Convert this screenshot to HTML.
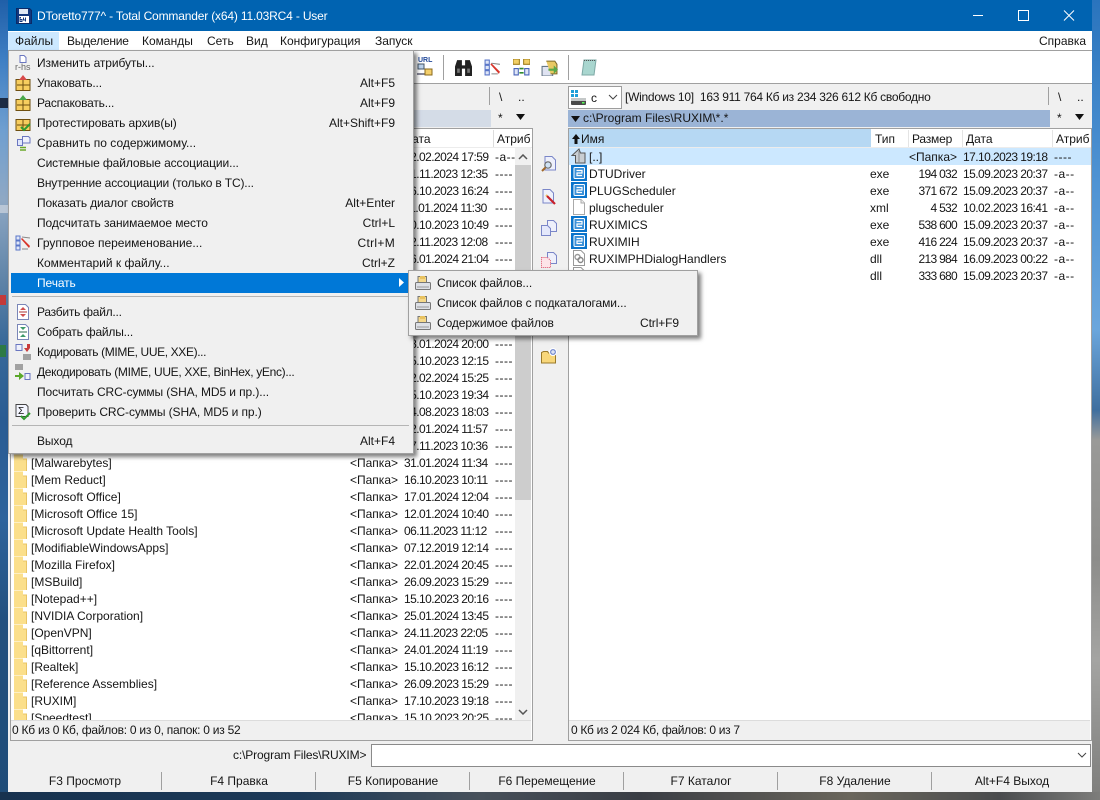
<!DOCTYPE html>
<html lang="ru"><head><meta charset="utf-8"><title>Total Commander</title>
<style>
html,body{margin:0;padding:0}
body{width:1100px;height:800px;overflow:hidden;position:relative;background:#2d5f96;font:12px/17px "Liberation Sans","DejaVu Sans",sans-serif;color:#151515}
div,span,svg{position:absolute;white-space:nowrap}
svg.i{width:16px;height:16px;overflow:visible}
.bgL{left:0;top:0;width:8px;height:800px;background:linear-gradient(#1f5fa8 0,#3f7fc4 60px,#6f9fd0 130px,#8fa8c4 200px,#5f84a8 280px,#3a6a9a 340px,#2a5c93 420px,#2d639c 520px,#22507f 620px,#1f4c78 800px)}
.bgR{left:1092px;top:0;width:8px;height:800px;background:linear-gradient(#2a74bd 0,#4f93d3 180px,#6ba6dc 330px,#3f6f9f 410px,#9a9a98 440px,#8d8d8b 560px,#a4a4a2 660px,#7d7d7b 800px)}
.bgB{left:0;top:792px;width:1100px;height:8px;background:linear-gradient(90deg,#17324f 0,#1d3a58 300px,#47505a 480px,#3a3d44 640px,#6a665c 850px,#4a4c4e 1000px,#7d7d7b 1100px)}
.win{left:8px;top:0;width:1084px;height:792px;background:#f0f0f0}
.tb{left:8px;top:0;width:1084px;height:31px;background:#0063b1;color:#fff}
.m{top:32px;height:18px;line-height:17px;margin-top:1px}
.bar{background:#fff}
.ln{background:#a0a0a0}
.h{top:130px;line-height:17px;margin-top:1px}
.lp{left:0;top:0;width:1100px;height:720px;overflow:hidden}
.r{left:0;width:1100px;height:17px;line-height:17px;margin-top:1px}
.n{left:31px}.z{right:702px}.d{left:404px;letter-spacing:-.56px}.a{left:495px;letter-spacing:.5px}
.n2{left:589px}.x{left:870px}.z2{right:143px}.d2{left:963px;letter-spacing:-.56px}.a2{left:1054px;letter-spacing:.5px}
.q{letter-spacing:-.7px}
.fi{left:14px;top:-1px;width:13px;height:17px}
.fk{top:773px;height:17px;line-height:17px;text-align:center;width:154px}
.sp{top:772px;width:1px;height:18px;background:#a0a0a0}
.menu{background:#f0f0f0;border:1px solid #a0a0a0;box-shadow:3px 3px 4px rgba(0,0,0,.5)}
.t{line-height:17px;height:17px;margin-top:1px;letter-spacing:-.1px}
.sc{line-height:17px;height:17px;right:705px;margin-top:1px}
</style></head>
<body>
<svg width="0" height="0" style="left:0;top:0">
<defs>
<symbol id="fo" viewBox="0 0 13 17"><path d="M0 .5h9v4h4V17H0z" fill="#fbdf8b"/><path d="M9 .5v4h4V17h-1V5.500H9z" fill="#e8c465"/></symbol>
<symbol id="ex" viewBox="0 0 16 16"><rect width="16" height="16" fill="#0a74cb"/><rect x="3" y="2.500" width="10.500" height="11" rx="1" fill="#3a90d8" stroke="#fff"/><path d="M5.500 5.500h5.500v2.500H6v2.500h5" fill="none" stroke="#fff" stroke-width="1.200"/></symbol>
<symbol id="dc" viewBox="0 0 16 16"><path d="M2.500.5h7.500l3.500 3.500v11.500h-11z" fill="#fff" stroke="#aaa"/><path d="M10 .5v3.500h3.500" fill="#eee" stroke="#aaa"/></symbol>
<symbol id="dl" viewBox="0 0 16 16"><path d="M2.500.5h7.500l3.500 3.500v11.500h-11z" fill="#fff" stroke="#999"/><circle cx="6.500" cy="7" r="2.500" fill="none" stroke="#999" stroke-width="1.400"/><circle cx="9.500" cy="10" r="2.500" fill="none" stroke="#888" stroke-width="1.400"/></symbol>
<symbol id="up" viewBox="0 0 16 16"><path d="M8 1 1 7.500h3.500V15H14V5H9.500z" fill="#c9ced2" stroke="#555"/><path d="M8 3v11" stroke="#8a8f92"/></symbol>
<symbol id="arc" viewBox="0 0 16 16"><rect x="1" y="4.500" width="14" height="11" fill="#f7cd5e" stroke="#6e4f10"/><path d="M8 5v10M2 10h13" stroke="#6e4f10"/></symbol>
<symbol id="prn" viewBox="0 0 16 16"><path d="M3 7V1.500h8.500V7" fill="#f6d98a" stroke="#777"/><rect x="5" y="1" width="5" height="3" fill="#e8c260"/><rect x=".5" y="7.500" width="15" height="7" rx="1" fill="#dde0e6" stroke="#777"/><path d="M2 12h12" stroke="#999"/></symbol>
</defs></svg>

<div class="bgL"></div><div class="bgR"></div><div class="bgB"></div>
<div style="left:0;top:98px;width:8px;height:10px;background:#1c2c44"></div>
<div style="left:0;top:205px;width:8px;height:8px;background:#b9c6d6"></div>
<div style="left:0;top:295px;width:6px;height:10px;background:#c33a3a"></div>
<div style="left:0;top:345px;width:6px;height:12px;background:#2e7a45"></div>
<div class="win"></div>

<div class="tb"></div>
<svg class="i" style="left:16px;top:8px" viewBox="0 0 16 16"><path d="M.5.5h13l2 2v13H.5z" fill="#12387f" stroke="#0b2a66"/><rect x="3" y="1" width="9" height="5" fill="#dfe8f5"/><rect x="3" y="8" width="10" height="7" fill="#fff"/><path d="M5 9.500H4v4h2v-2H4M9.500 9.500v2.500H7.500V9.500M9.500 12v1.500" fill="none" stroke="#12387f"/></svg>
<div style="left:37px;top:8px;color:#fff;letter-spacing:-.17px">DToretto777^ - Total Commander (x64) 11.03RC4 - User</div>
<svg style="left:968px;top:8px;width:120px;height:16px" viewBox="0 0 120 16" fill="none" stroke="#fff"><path d="M5 7.500h10"/><rect x="50.500" y="2.500" width="10" height="10"/><path d="M96 2.500l10 10M106 2.500l-10 10"/></svg>

<div class="bar" style="left:8px;top:31px;width:1084px;height:19px"></div>
<div style="left:8px;top:32px;width:51px;height:18px;background:#cce8ff"></div>
<div class="m" style="left:15px">Файлы</div>
<div class="m" style="left:67px;letter-spacing:-.2px">Выделение</div>
<div class="m" style="left:142px">Команды</div>
<div class="m" style="left:207px">Сеть</div>
<div class="m" style="left:246px">Вид</div>
<div class="m" style="left:280px">Конфигурация</div>
<div class="m" style="left:375px">Запуск</div>
<div class="m" style="left:1039px">Справка</div>
<div class="ln" style="left:8px;top:50px;width:1084px;height:1px"></div>

<div class="bar" style="left:8px;top:51px;width:1084px;height:32px"></div>
<div class="ln" style="left:8px;top:83px;width:1084px;height:1px"></div>
<div class="ln" style="left:443px;top:55px;width:1px;height:25px"></div>
<div class="ln" style="left:568px;top:55px;width:1px;height:25px"></div>
<div style="left:418px;top:57px;font-size:7px;line-height:8px;color:#234a9a;font-weight:bold">URL</div>
<svg class="i" style="left:417px;top:60px" viewBox="0 0 16 16"><rect x="1" y="4" width="6" height="5" fill="#bcd3ee" stroke="#456"/><path d="M0 13h8v2H0z" fill="#889"/><path d="M8 9h7v6H8z" fill="#f4cf6b" stroke="#8a6a1c"/></svg>
<svg style="left:455px;top:59px;width:17px;height:17px" viewBox="0 0 16 16"><path d="M0 16V7l2-6h4.500v5h3V1H14l2 6v9H9.500V9h-3v7z" fill="#222"/><rect x="2" y="9" width="2.500" height="4" fill="#777"/><rect x="11.500" y="9" width="2.500" height="4" fill="#777"/></svg>
<svg style="left:484px;top:59px;width:17px;height:17px" viewBox="0 0 16 16"><path d="M1 1h4v4H1zM1 6h4v4H1zM1 11h4v4H1z" fill="#dfe6f7" stroke="#5a76c8"/><path d="M7 4l8 1M7 14h6" stroke="#888"/><path d="M6 5l8 9 1-2-8-8z" fill="#d8352a"/></svg>
<svg style="left:513px;top:59px;width:17px;height:17px" viewBox="0 0 16 16"><path d="M0 0h6v5H0zM10 0h6v5h-6z" fill="#f2cf66" stroke="#a07e1d"/><path d="M1 9h4v6H1zM11 9h4v6h-4z" fill="#dfe6f7" stroke="#4a64b8"/><path d="M6 9h4M6 13h4" stroke="#2f8a2f" stroke-width="1.500"/></svg>
<svg style="left:541px;top:59px;width:17px;height:17px" viewBox="0 0 16 16"><path d="M1 7h10v9H1z" fill="#dfe3f2" stroke="#678"/><path d="M5 2h8l2 3v9H9" fill="#e9c963" stroke="#7d6a2a"/><path d="M7 9h5V6l4 4-4 4v-3H7z" fill="#5aa848"/></svg>
<svg class="i" style="left:581px;top:59px" viewBox="0 0 16 16"><path d="M3 1h12l-2 15H1z" fill="#a9d6cf" stroke="#7ea9a6"/><path d="M3 1.500h12" stroke="#555" stroke-dasharray="1 1"/></svg>

<!-- Drive bars -->
<div class="ln" style="left:489px;top:87px;width:1px;height:18px"></div>
<div style="left:499px;top:89px">\</div><div style="left:518px;top:89px">..</div>
<div style="left:414px;top:110px;width:77px;height:17px;background:#d4dce7"></div>
<div style="left:498px;top:110px">*</div>
<svg style="left:516px;top:114px;width:9px;height:6px" viewBox="0 0 9 6"><path d="M0 0h9L4.500 6z" fill="#111"/></svg>

<div style="left:568px;top:86px;width:52px;height:21px;background:#fff;border:1px solid #9d9d9d"></div>
<svg class="i" style="left:571px;top:90px" viewBox="0 0 16 16"><path d="M0 0h3v3H0zM4 0h3v3H4zM0 4h3v3H0zM4 4h3v3H4z" fill="#1e9fd8"/><rect x="0" y="8" width="15" height="7" rx="1" fill="#4a4a4a"/><rect x="0" y="8" width="15" height="3" fill="#c4c8c8"/><rect x="11" y="12" width="2.500" height="1.500" fill="#5f5"/></svg>
<div style="left:591px;top:90px">c</div>
<svg style="left:608px;top:94px;width:10px;height:6px" viewBox="0 0 10 6"><path d="M1 1l4 4 4-4" fill="none" stroke="#444"/></svg>
<div style="left:625px;top:89px;letter-spacing:-.27px">[Windows 10]&nbsp; 163 911 764 Кб из 234 326 612 Кб свободно</div>
<div class="ln" style="left:1048px;top:87px;width:1px;height:18px"></div>
<div style="left:1058px;top:89px">\</div><div style="left:1077px;top:89px">..</div>
<div style="left:568px;top:110px;width:482px;height:17px;background:#9bb4d6"></div>
<svg style="left:571px;top:116px;width:9px;height:6px" viewBox="0 0 9 6"><path d="M0 0h9L4.500 6z" fill="#111"/></svg>
<div style="left:583px;top:110px">c:\Program Files\RUXIM\*.*</div>
<div style="left:1057px;top:110px">*</div>
<svg style="left:1075px;top:114px;width:9px;height:6px" viewBox="0 0 9 6"><path d="M0 0h9L4.500 6z" fill="#111"/></svg>

<!-- Left panel -->
<div style="left:10px;top:128px;width:521px;height:611px;background:#fff;border:1px solid #a0a0a0"></div>
<div style="left:11px;top:147px;width:521px;height:1px;background:#ececec"></div>
<div class="h" style="left:404px">Дата</div>
<div style="left:493px;top:130px;width:1px;height:17px;background:#dcdcdc"></div>
<div class="h" style="left:497px">Атриб</div>
<div style="left:515px;top:148px;width:16px;height:572px;background:#f0f0f0"></div>
<div style="left:515px;top:165px;width:16px;height:335px;background:#cdcdcd"></div>
<svg style="left:518px;top:154px;width:10px;height:6px" viewBox="0 0 10 6"><path d="M1 5l4-4 4 4" fill="none" stroke="#555" stroke-width="1.500"/></svg>
<svg style="left:518px;top:709px;width:10px;height:6px" viewBox="0 0 10 6"><path d="M1 1l4 4 4-4" fill="none" stroke="#555" stroke-width="1.500"/></svg>

<div class="lp">
<div class="r" style="top:148px"><span class="d">22.02.2024 17:59</span><span class="a">-a--</span></div>
<div class="r" style="top:165px"><span class="d">21.11.2023 12:35</span><span class="a">----</span></div>
<div class="r" style="top:182px"><span class="d">16.10.2023 16:24</span><span class="a">----</span></div>
<div class="r" style="top:199px"><span class="d">11.01.2024 11:30</span><span class="a">----</span></div>
<div class="r" style="top:216px"><span class="d">10.10.2023 10:49</span><span class="a">----</span></div>
<div class="r" style="top:233px"><span class="d">22.11.2023 12:08</span><span class="a">----</span></div>
<div class="r" style="top:250px"><span class="d">16.01.2024 21:04</span><span class="a">----</span></div>
<div class="r" style="top:267px"><span class="a">----</span></div>
<div class="r" style="top:284px"><span class="a">----</span></div>
<div class="r" style="top:301px"><span class="a">----</span></div>
<div class="r" style="top:318px"><span class="a">----</span></div>
<div class="r" style="top:335px"><span class="d">18.01.2024 20:00</span><span class="a">----</span></div>
<div class="r" style="top:352px"><span class="d">15.10.2023 12:15</span><span class="a">----</span></div>
<div class="r" style="top:369px"><span class="d">22.02.2024 15:25</span><span class="a">----</span></div>
<div class="r" style="top:386px"><span class="d">15.10.2023 19:34</span><span class="a">----</span></div>
<div class="r" style="top:403px"><span class="d">14.08.2023 18:03</span><span class="a">----</span></div>
<div class="r" style="top:420px"><span class="d">12.01.2024 11:57</span><span class="a">----</span></div>
<div class="r" style="top:437px"><span class="d">17.11.2023 10:36</span><span class="a">----</span></div>
<div class="r" style="top:454px"><svg class="fi"><use href="#fo"/></svg><span class="n">[Malwarebytes]</span><span class="z">&lt;Папка&gt;</span><span class="d">31.01.2024 11:34</span><span class="a">----</span></div>
<div class="r" style="top:471px"><svg class="fi"><use href="#fo"/></svg><span class="n">[Mem Reduct]</span><span class="z">&lt;Папка&gt;</span><span class="d">16.10.2023 10:11</span><span class="a">----</span></div>
<div class="r" style="top:488px"><svg class="fi"><use href="#fo"/></svg><span class="n">[Microsoft Office]</span><span class="z">&lt;Папка&gt;</span><span class="d">17.01.2024 12:04</span><span class="a">----</span></div>
<div class="r" style="top:505px"><svg class="fi"><use href="#fo"/></svg><span class="n">[Microsoft Office 15]</span><span class="z">&lt;Папка&gt;</span><span class="d">12.01.2024 10:40</span><span class="a">----</span></div>
<div class="r" style="top:522px"><svg class="fi"><use href="#fo"/></svg><span class="n">[Microsoft Update Health Tools]</span><span class="z">&lt;Папка&gt;</span><span class="d">06.11.2023 11:12</span><span class="a">----</span></div>
<div class="r" style="top:539px"><svg class="fi"><use href="#fo"/></svg><span class="n">[ModifiableWindowsApps]</span><span class="z">&lt;Папка&gt;</span><span class="d">07.12.2019 12:14</span><span class="a">----</span></div>
<div class="r" style="top:556px"><svg class="fi"><use href="#fo"/></svg><span class="n">[Mozilla Firefox]</span><span class="z">&lt;Папка&gt;</span><span class="d">22.01.2024 20:45</span><span class="a">----</span></div>
<div class="r" style="top:573px"><svg class="fi"><use href="#fo"/></svg><span class="n">[MSBuild]</span><span class="z">&lt;Папка&gt;</span><span class="d">26.09.2023 15:29</span><span class="a">----</span></div>
<div class="r" style="top:590px"><svg class="fi"><use href="#fo"/></svg><span class="n">[Notepad++]</span><span class="z">&lt;Папка&gt;</span><span class="d">15.10.2023 20:16</span><span class="a">----</span></div>
<div class="r" style="top:607px"><svg class="fi"><use href="#fo"/></svg><span class="n">[NVIDIA Corporation]</span><span class="z">&lt;Папка&gt;</span><span class="d">25.01.2024 13:45</span><span class="a">----</span></div>
<div class="r" style="top:624px"><svg class="fi"><use href="#fo"/></svg><span class="n">[OpenVPN]</span><span class="z">&lt;Папка&gt;</span><span class="d">24.11.2023 22:05</span><span class="a">----</span></div>
<div class="r" style="top:641px"><svg class="fi"><use href="#fo"/></svg><span class="n">[qBittorrent]</span><span class="z">&lt;Папка&gt;</span><span class="d">24.01.2024 11:19</span><span class="a">----</span></div>
<div class="r" style="top:658px"><svg class="fi"><use href="#fo"/></svg><span class="n">[Realtek]</span><span class="z">&lt;Папка&gt;</span><span class="d">15.10.2023 16:12</span><span class="a">----</span></div>
<div class="r" style="top:675px"><svg class="fi"><use href="#fo"/></svg><span class="n">[Reference Assemblies]</span><span class="z">&lt;Папка&gt;</span><span class="d">26.09.2023 15:29</span><span class="a">----</span></div>
<div class="r" style="top:692px"><svg class="fi"><use href="#fo"/></svg><span class="n">[RUXIM]</span><span class="z">&lt;Папка&gt;</span><span class="d">17.10.2023 19:18</span><span class="a">----</span></div>
<div class="r" style="top:709px"><svg class="fi"><use href="#fo"/></svg><span class="n">[Speedtest]</span><span class="z">&lt;Папка&gt;</span><span class="d">15.10.2023 20:25</span><span class="a">----</span></div>
</div>
<div style="left:11px;top:720px;width:520px;height:19px;background:#f0f0f0;border-top:1px solid #dcdcdc"></div>
<div style="left:12px;top:722px;letter-spacing:-.25px">0 Кб из 0 Кб, файлов: 0 из 0, папок: 0 из 52</div>

<!-- Middle buttons -->
<svg class="i" style="left:541px;top:156px" viewBox="0 0 16 16"><path d="M4 .5h7l3.500 3.500v10H4z" fill="#eef0fb" stroke="#7a86c8"/><circle cx="7" cy="9" r="3.200" fill="#cfe2f5" stroke="#6a6a6a" stroke-width="1.200"/><path d="M4.500 11.500L1 15" stroke="#a0682a" stroke-width="2"/></svg>
<svg class="i" style="left:541px;top:189px" viewBox="0 0 16 16"><path d="M2 .5h7l3.500 3.500v10H2z" fill="#eef0fb" stroke="#7a86c8"/><path d="M6 7l8 8" stroke="#c8202a" stroke-width="2.200"/><path d="M5 6l1 1" stroke="#e8c060" stroke-width="2"/></svg>
<svg class="i" style="left:541px;top:220px" viewBox="0 0 16 16"><path d="M6.500.5h6l3 3v8h-9z" fill="#eef0fb" stroke="#7a86c8"/><path d="M.5 5.500h6l3 3v7h-9z" fill="#e4e8fb" stroke="#7a86c8"/></svg>
<svg class="i" style="left:541px;top:252px" viewBox="0 0 16 16"><path d="M6.500.5h6l3 3v8h-9z" fill="#eef0fb" stroke="#7a86c8"/><path d="M.5 5.500h6l3 3v7h-9z" fill="#fde4e8" stroke="#e0506a" stroke-dasharray="1 1"/></svg>
<svg class="i" style="left:541px;top:348px" viewBox="0 0 16 16"><path d="M.5 15V4.500l2-1h4l1 1.500h7v10z" fill="#f8d77a" stroke="#9a7a2a"/><circle cx="12" cy="4" r="3.500" fill="#7a8fd0" stroke="#fff"/><path d="M12 2v4M10 4h4" stroke="#fff"/></svg>

<!-- Right panel -->
<div style="left:568px;top:128px;width:522px;height:611px;background:#fff;border:1px solid #a0a0a0"></div>
<div style="left:569px;top:129px;width:302px;height:18px;background:#b6d8f3"></div>
<div style="left:569px;top:147px;width:522px;height:1px;background:#ececec"></div>
<svg style="left:572px;top:134px;width:8px;height:10px" viewBox="0 0 8 10"><path d="M4 0L0 5h2.500v5h3V5H8z" fill="#111"/></svg>
<div class="h" style="left:581px">Имя</div>
<div class="h" style="left:875px">Тип</div>
<div style="left:908px;top:130px;width:1px;height:17px;background:#e4e4e4"></div>
<div class="h" style="left:912px;letter-spacing:-.2px">Размер</div>
<div style="left:962px;top:130px;width:1px;height:17px;background:#e4e4e4"></div>
<div class="h" style="left:966px">Дата</div>
<div style="left:1052px;top:130px;width:1px;height:17px;background:#e4e4e4"></div>
<div class="h" style="left:1056px">Атриб</div>
<div style="left:569px;top:148px;width:522px;height:17px;background:#cce8ff"></div>

<svg class="i" style="left:571px;top:148px"><use href="#up"/></svg>
<div class="r" style="top:148px"><span class="n2">[..]</span><span class="z2">&lt;Папка&gt;</span><span class="d2">17.10.2023 19:18</span><span class="a2">----</span></div>
<svg class="i" style="left:571px;top:165px"><use href="#ex"/></svg>
<div class="r" style="top:165px"><span class="n2">DTUDriver</span><span class="x">exe</span><span class="z2 q">194 032</span><span class="d2">15.09.2023 20:37</span><span class="a2">-a--</span></div>
<svg class="i" style="left:571px;top:182px"><use href="#ex"/></svg>
<div class="r" style="top:182px"><span class="n2">PLUGScheduler</span><span class="x">exe</span><span class="z2 q">371 672</span><span class="d2">15.09.2023 20:37</span><span class="a2">-a--</span></div>
<svg class="i" style="left:571px;top:199px"><use href="#dc"/></svg>
<div class="r" style="top:199px"><span class="n2">plugscheduler</span><span class="x">xml</span><span class="z2 q">4 532</span><span class="d2">10.02.2023 16:41</span><span class="a2">-a--</span></div>
<svg class="i" style="left:571px;top:216px"><use href="#ex"/></svg>
<div class="r" style="top:216px"><span class="n2">RUXIMICS</span><span class="x">exe</span><span class="z2 q">538 600</span><span class="d2">15.09.2023 20:37</span><span class="a2">-a--</span></div>
<svg class="i" style="left:571px;top:233px"><use href="#ex"/></svg>
<div class="r" style="top:233px"><span class="n2">RUXIMIH</span><span class="x">exe</span><span class="z2 q">416 224</span><span class="d2">15.09.2023 20:37</span><span class="a2">-a--</span></div>
<svg class="i" style="left:571px;top:250px"><use href="#dl"/></svg>
<div class="r" style="top:250px"><span class="n2">RUXIMPHDialogHandlers</span><span class="x">dll</span><span class="z2 q">213 984</span><span class="d2">16.09.2023 00:22</span><span class="a2">-a--</span></div>
<svg class="i" style="left:571px;top:267px"><use href="#dl"/></svg>
<div class="r" style="top:267px"><span class="x">dll</span><span class="z2 q">333 680</span><span class="d2">15.09.2023 20:37</span><span class="a2">-a--</span></div>

<div style="left:569px;top:720px;width:521px;height:19px;background:#f0f0f0;border-top:1px solid #dcdcdc"></div>
<div style="left:571px;top:722px;letter-spacing:-.32px">0 Кб из 2 024 Кб, файлов: 0 из 7</div>

<!-- Command line -->
<div style="left:233px;top:747px;letter-spacing:-.13px">c:\Program Files\RUXIM&gt;</div>
<div style="left:371px;top:744px;width:718px;height:21px;background:#fff;border:1px solid #8a8a8a"></div>
<svg style="left:1077px;top:752px;width:10px;height:6px" viewBox="0 0 10 6"><path d="M1 1l4 4 4-4" fill="none" stroke="#444"/></svg>

<div class="fk" style="left:8px">F3 Просмотр</div><div class="sp" style="left:161px"></div>
<div class="fk" style="left:162px">F4 Правка</div><div class="sp" style="left:315px"></div>
<div class="fk" style="left:316px">F5 Копирование</div><div class="sp" style="left:469px"></div>
<div class="fk" style="left:470px">F6 Перемещение</div><div class="sp" style="left:623px"></div>
<div class="fk" style="left:624px">F7 Каталог</div><div class="sp" style="left:777px"></div>
<div class="fk" style="left:778px">F8 Удаление</div><div class="sp" style="left:931px"></div>
<div class="fk" style="left:935px">Alt+F4 Выход</div>

<!-- File menu -->
<div class="menu" style="left:8px;top:50px;width:404px;height:402px"></div>
<div style="left:11px;top:273px;width:398px;height:20px;background:#0078d7"></div>
<div style="left:12px;top:296px;width:397px;height:1px;background:#b5b5b5"></div>
<div style="left:12px;top:425px;width:397px;height:1px;background:#b5b5b5"></div>

<div style="left:15px;top:62px;font-size:9px;line-height:11px;color:#666">r-hs</div>
<svg style="left:19px;top:55px;width:8px;height:8px" viewBox="0 0 8 8"><path d="M1 .5h4l2 2v5H1z" fill="#fff" stroke="#6a76c0"/></svg>
<svg class="i" style="left:15px;top:75px"><use href="#arc"/></svg>
<svg style="left:19px;top:75px;width:8px;height:6px" viewBox="0 0 8 6"><path d="M0 5l4-5 4 5z" fill="#d84a4a"/></svg>
<svg class="i" style="left:15px;top:95px"><use href="#arc"/></svg>
<svg style="left:19px;top:95px;width:8px;height:6px" viewBox="0 0 8 6"><path d="M0 5l4-5 4 5z" fill="#4aa84a"/></svg>
<svg class="i" style="left:15px;top:115px"><use href="#arc"/></svg>
<svg style="left:20px;top:123px;width:11px;height:9px" viewBox="0 0 11 9"><path d="M1 4l3 3 6-6" fill="none" stroke="#2f9a2f" stroke-width="2"/></svg>
<svg class="i" style="left:15px;top:135px" viewBox="0 0 16 16"><path d="M7.500 1.500h6l1.500 1.500v5h-7.500z" fill="#eef0fb" stroke="#6a76c0"/><path d="M2.500 4.500h5v6h-5z" fill="#dfe6fb" stroke="#6a76c0"/><path d="M5 12.500h6M5 15h6" stroke="#6ba82a" stroke-width="1.500"/></svg>
<svg class="i" style="left:15px;top:235px" viewBox="0 0 16 16"><path d="M1 1h4v4H1zM1 6h4v4H1zM1 11h4v4H1z" fill="#dfe6f7" stroke="#5a76c8"/><path d="M7 2l8 1M7 14h6" stroke="#888"/><path d="M6 4l8 9 1-2-8-8z" fill="#d8352a"/></svg>
<svg class="i" style="left:15px;top:304px" viewBox="0 0 16 16"><path d="M2.500.5h8l3 3v12h-11z" fill="#fff" stroke="#7a86b8"/><path d="M4 8h8" stroke="#a33" /><path d="M5 6l3-3 3 3zM5 10l3 3 3-3z" fill="#d05050"/></svg>
<svg class="i" style="left:15px;top:324px" viewBox="0 0 16 16"><path d="M2.500.5h8l3 3v12h-11z" fill="#fff" stroke="#7a86b8"/><path d="M4 8h8" stroke="#2a6a4a"/><path d="M5 3l3 3 3-3zM5 13l3-3 3 3z" fill="#3f9a6a"/></svg>
<svg class="i" style="left:15px;top:344px" viewBox="0 0 16 16"><path d="M1 .5h6v6H1z" fill="#eef0fb" stroke="#6a76c0"/><path d="M9 4h3V0h3v4h0l-3 4z" fill="#c83a3a"/><path d="M9 10v6M11 10v6M13 10v6M15 10v6" stroke="#555"/></svg>
<svg class="i" style="left:15px;top:364px" viewBox="0 0 16 16"><path d="M1 0v6M3 0v6M5 0v6M7 0v6" stroke="#555"/><path d="M0 11h4V8l5 4-5 4v-3H0z" fill="#5aa82a"/><path d="M10 9.500h5v6h-5z" fill="#eef0fb" stroke="#6a76c0"/></svg>
<svg class="i" style="left:15px;top:404px" viewBox="0 0 16 16"><path d="M1 .5h10l2 2v10H1z" fill="#f4f6ff" stroke="#444"/><text x="3" y="10" font-size="10" font-family="Liberation Sans" fill="#111">Σ</text><path d="M6 12l3 3 6-6" fill="none" stroke="#2f9a2f" stroke-width="2"/></svg>

<div class="t" style="left:37px;top:54px">Изменить атрибуты...</div>
<div class="t" style="left:37px;top:74px;letter-spacing:-.15px">Упаковать...</div><div class="sc" style="top:74px">Alt+F5</div>
<div class="t" style="left:37px;top:94px;letter-spacing:-.2px">Распаковать...</div><div class="sc" style="top:94px">Alt+F9</div>
<div class="t" style="left:37px;top:114px">Протестировать архив(ы)</div><div class="sc" style="top:114px">Alt+Shift+F9</div>
<div class="t" style="left:37px;top:134px;letter-spacing:0">Сравнить по содержимому...</div>
<div class="t" style="left:37px;top:154px">Системные файловые ассоциации...</div>
<div class="t" style="left:37px;top:174px;letter-spacing:-.16px">Внутренние ассоциации (только в TC)...</div>
<div class="t" style="left:37px;top:194px;letter-spacing:-.13px">Показать диалог свойств</div><div class="sc" style="top:194px">Alt+Enter</div>
<div class="t" style="left:37px;top:214px;letter-spacing:-.07px">Подсчитать занимаемое место</div><div class="sc" style="top:214px">Ctrl+L</div>
<div class="t" style="left:37px;top:234px;letter-spacing:0">Групповое переименование...</div><div class="sc" style="top:234px;letter-spacing:.3px">Ctrl+M</div>
<div class="t" style="left:37px;top:254px;letter-spacing:0">Комментарий к файлу...</div><div class="sc" style="top:254px">Ctrl+Z</div>
<div class="t" style="left:37px;top:274px;color:#fff">Печать</div>
<svg style="left:399px;top:278px;width:6px;height:9px" viewBox="0 0 6 9"><path d="M0 0l5 4.500L0 9z" fill="#fff"/></svg>
<div class="t" style="left:37px;top:303px;letter-spacing:-.25px">Разбить файл...</div>
<div class="t" style="left:37px;top:323px;letter-spacing:-.2px">Собрать файлы...</div>
<div class="t" style="left:37px;top:343px;letter-spacing:-.37px">Кодировать (MIME, UUE, XXE)...</div>
<div class="t" style="left:37px;top:363px;letter-spacing:-.32px">Декодировать (MIME, UUE, XXE, BinHex, yEnc)...</div>
<div class="t" style="left:37px;top:383px">Посчитать CRC-суммы (SHA, MD5 и пр.)...</div>
<div class="t" style="left:37px;top:403px">Проверить CRC-суммы (SHA, MD5 и пр.)</div>
<div class="t" style="left:37px;top:432px">Выход</div><div class="sc" style="top:432px">Alt+F4</div>

<!-- Print submenu -->
<div class="menu" style="left:408px;top:270px;width:288px;height:64px"></div>
<svg class="i" style="left:415px;top:275px"><use href="#prn"/></svg>
<svg class="i" style="left:415px;top:295px"><use href="#prn"/></svg>
<svg class="i" style="left:415px;top:315px"><use href="#prn"/></svg>
<div class="t" style="left:437px;top:274px">Список файлов...</div>
<div class="t" style="left:437px;top:294px">Список файлов с подкаталогами...</div>
<div class="t" style="left:437px;top:314px">Содержимое файлов</div>
<div class="t" style="left:640px;top:314px">Ctrl+F9</div>
</body></html>
